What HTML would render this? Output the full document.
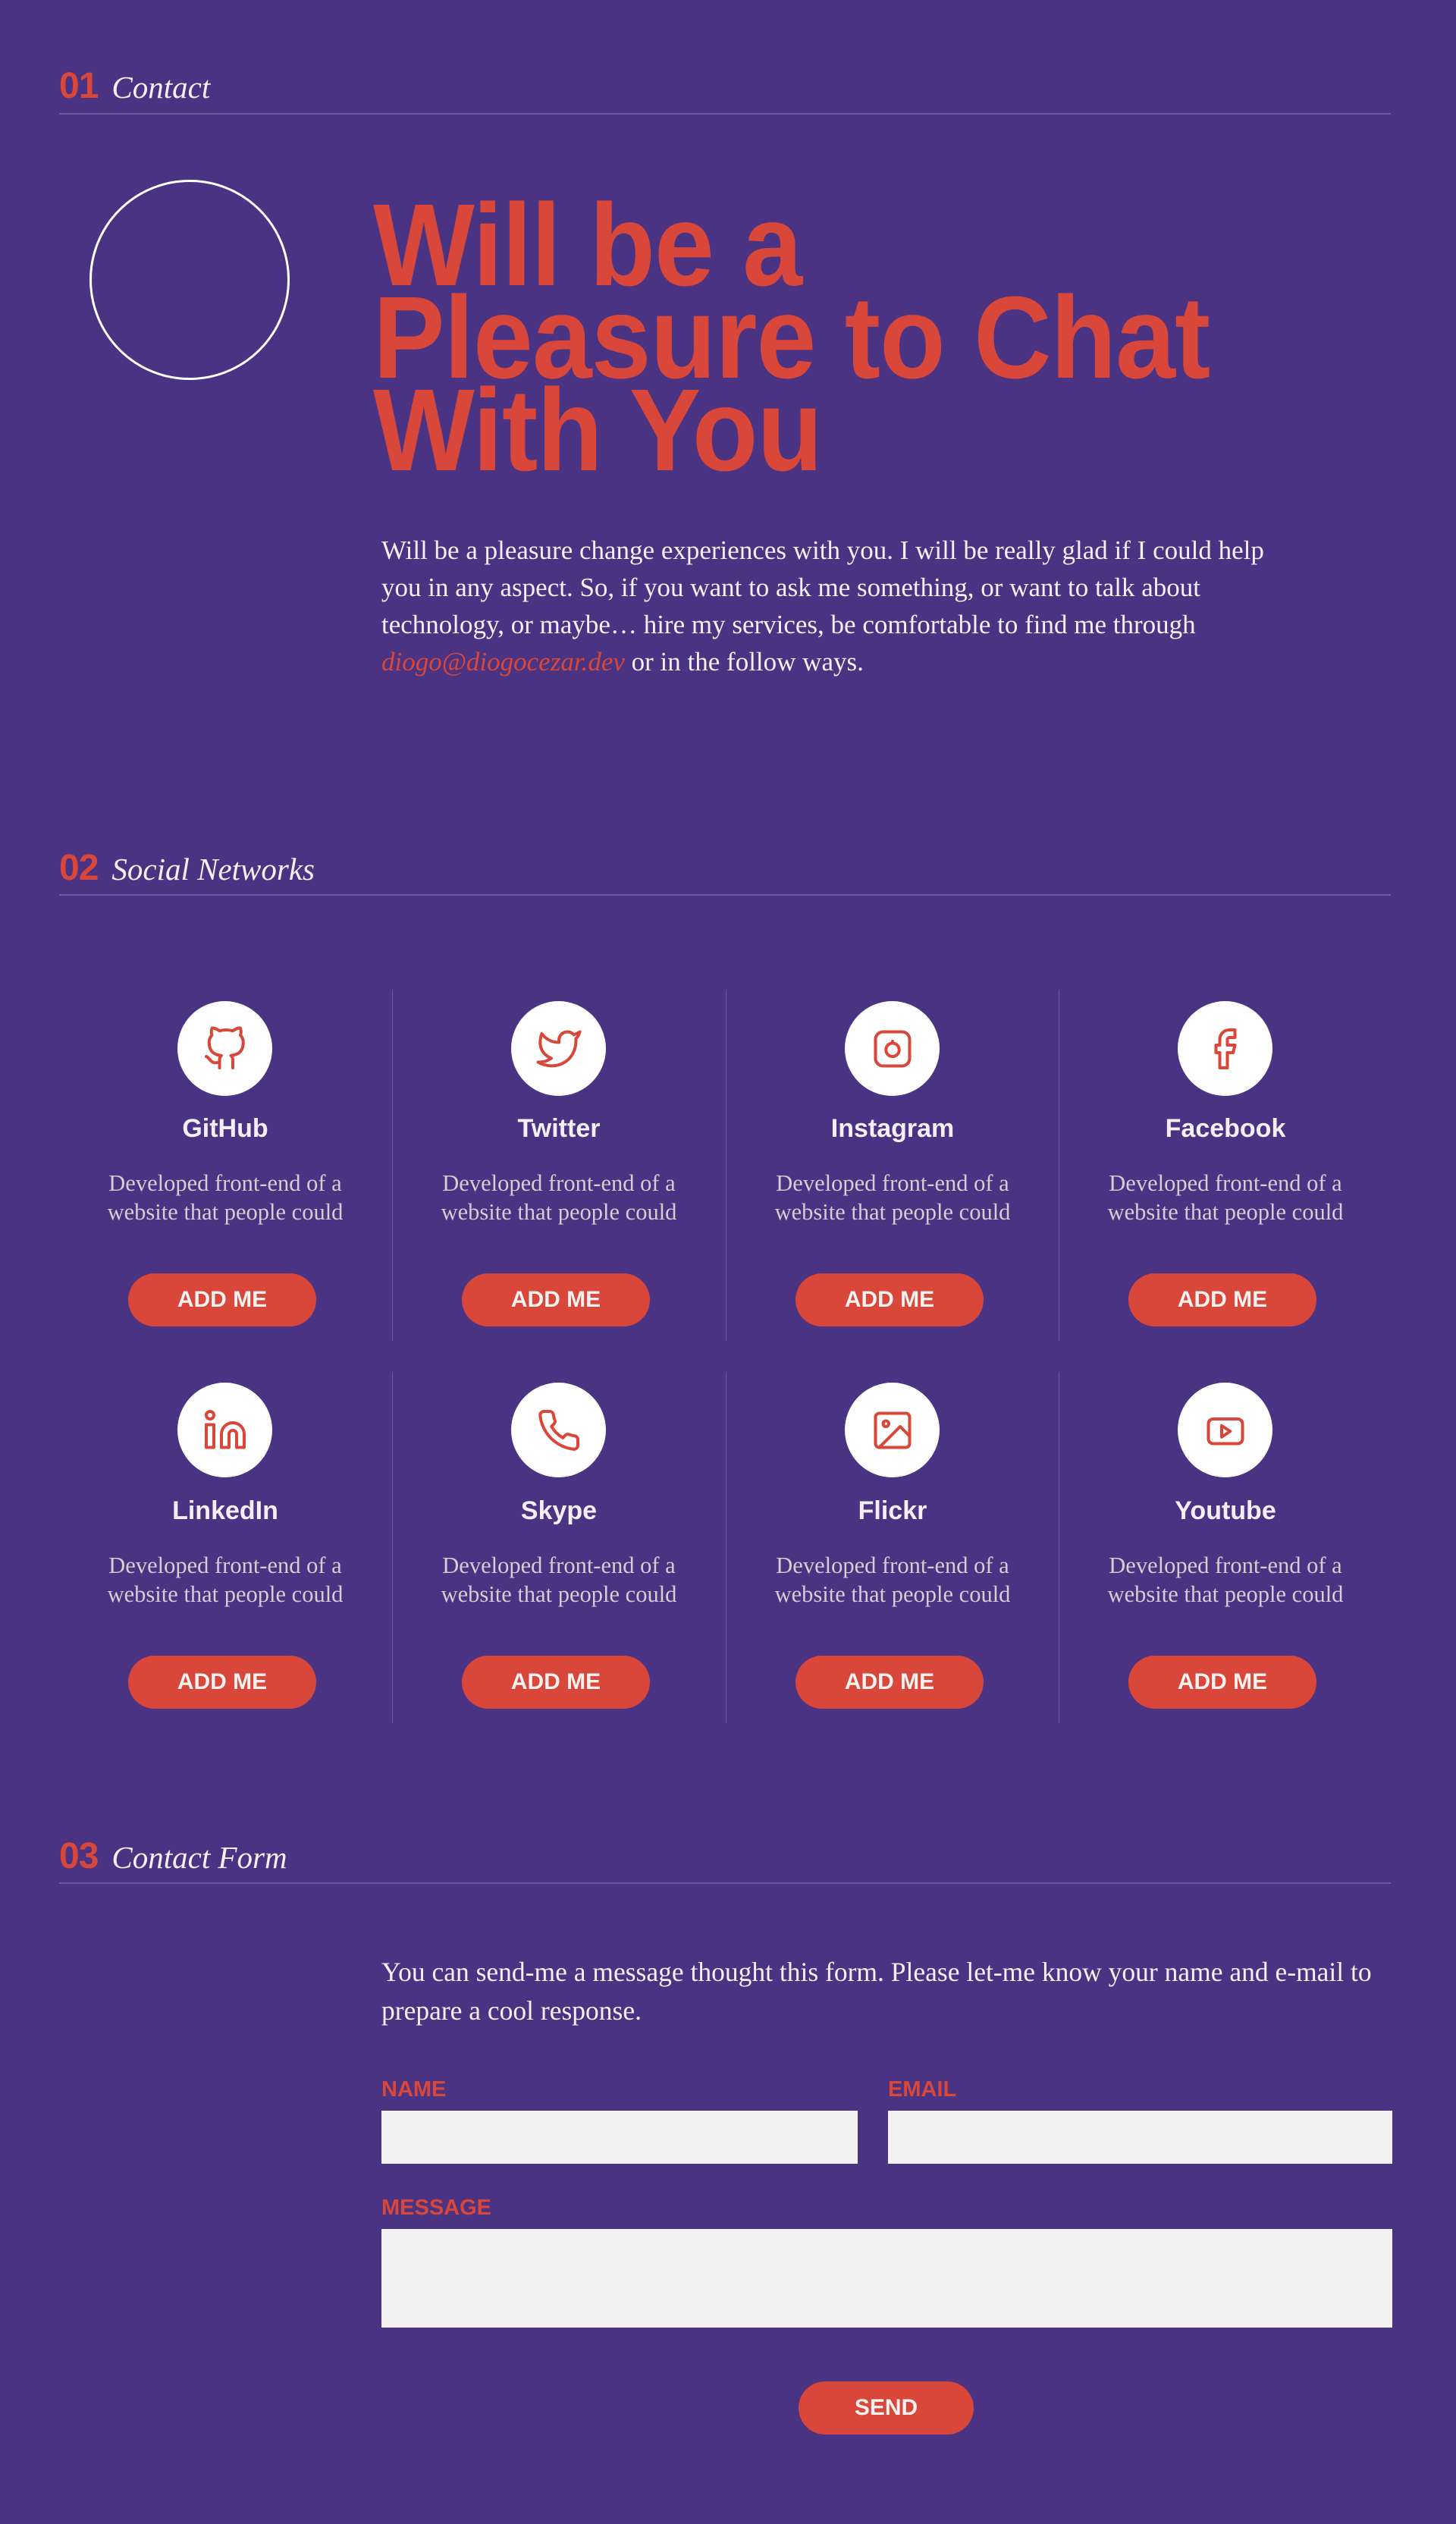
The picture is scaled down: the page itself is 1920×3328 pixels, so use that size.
<!DOCTYPE html>
<html><head><meta charset="utf-8"><style>
*{margin:0;padding:0;box-sizing:border-box}
body{width:1920px;height:3328px;background:#4a3382;position:relative;overflow:hidden;font-family:"Liberation Sans",sans-serif}
.a{position:absolute}
.sec{left:78px;line-height:48px;white-space:nowrap}
.sec b{font-family:"Liberation Sans",sans-serif;font-weight:700;font-size:48px;color:#d9473a;letter-spacing:-1px}
.sec i{font-family:"Liberation Serif",serif;font-size:41px;color:#f3f0f5;margin-left:18px}
.rule{left:78px;width:1756px;height:2px;background:#6a5a9c}
h1{position:absolute;left:492px;top:262px;font-family:"Liberation Sans",sans-serif;font-weight:700;font-size:154px;line-height:122px;letter-spacing:-1px;color:#d9473a;transform:scaleX(0.92);transform-origin:left top;white-space:nowrap}
.p{font-family:"Liberation Serif",serif;font-size:35px;color:#f3f0f5;white-space:nowrap}
.p em{color:#d9473a}
.col{width:440px;text-align:center}
.ic{position:absolute;width:125px;height:125px;border-radius:50%;background:#fff;left:157px;display:flex;align-items:center;justify-content:center}
.ic svg{width:60px;height:60px;fill:none;stroke:#d9473a;stroke-width:1.6;stroke-linecap:round;stroke-linejoin:round}
.t{position:absolute;left:0;width:440px;font-weight:700;font-size:34px;line-height:34px;color:#f3f0f5}
.d{position:absolute;left:-20px;width:480px;font-family:"Liberation Serif",serif;font-size:30.5px;line-height:38px;color:#d5cdd2;white-space:nowrap}
.btn{position:absolute;background:#d9473a;color:#f5f2f0;font-weight:700;font-size:30px;border-radius:35px;display:flex;align-items:center;justify-content:center}
.col .btn{left:92px;width:248px;height:70px}
.div{width:1px;background:#6a5a9c}
.lab{font-weight:700;font-size:29px;line-height:29px;color:#d9473a}
.in{background:#f2f2f2}
</style></head><body>

<div class="a sec" style="top:90px"><b>01</b><i>Contact</i></div>
<div class="a rule" style="top:149px"></div>

<div class="a" style="left:118px;top:237px;width:264px;height:264px;border:3px solid #fff;border-radius:50%"></div>
<h1>Will be a<br>Pleasure to Chat<br>With You</h1>

<div class="a p" style="left:503px;top:701px;line-height:49px">Will be a pleasure change experiences with you. I will be really glad if I could help<br>you in any aspect. So, if you want to ask me something, or want to talk about<br>technology, or maybe… hire my services, be comfortable to find me through<br><em>diogo@diogocezar.dev</em> or in the follow ways.</div>

<div class="a sec" style="top:1121px"><b>02</b><i>Social Networks</i></div>
<div class="a rule" style="top:1179px"></div>

<div class="a div" style="left:517px;top:1305px;height:463px"></div>
<div class="a div" style="left:957px;top:1305px;height:463px"></div>
<div class="a div" style="left:1396px;top:1305px;height:463px"></div>
<div class="a div" style="left:517px;top:1809px;height:463px"></div>
<div class="a div" style="left:957px;top:1809px;height:463px"></div>
<div class="a div" style="left:1396px;top:1809px;height:463px"></div>

<div class="a col" style="left:77px;top:0">
<div class="ic" style="top:1320px"><svg viewBox="0 0 24 24"><path d="M9 19c-5 1.5-5-2.5-7-3m14 6v-3.87a3.37 3.37 0 0 0-.94-2.61c3.14-.35 6.44-1.54 6.44-7A5.44 5.44 0 0 0 20 4.77 5.07 5.07 0 0 0 19.91 1S18.73.65 16 2.48a13.38 13.38 0 0 0-7 0C6.27.65 5.09 1 5.09 1A5.07 5.07 0 0 0 5 4.77a5.44 5.44 0 0 0-1.5 3.78c0 5.42 3.3 6.61 6.44 7A3.37 3.37 0 0 0 9 18.13V22"/></svg></div>
<div class="t" style="top:1471px">GitHub</div>
<div class="d" style="top:1541px">Developed front-end of a<br>website that people could</div>
<div class="btn" style="top:1679px">ADD ME</div></div>

<div class="a col" style="left:517px;top:0">
<div class="ic" style="top:1320px"><svg viewBox="0 0 24 24"><path d="M23 3a10.9 10.9 0 0 1-3.14 1.53 4.48 4.48 0 0 0-7.860 3v1A10.66 10.66 0 0 1 3 4s-4 9 5 13a11.64 11.64 0 0 1-7 2c9 5 20 0 20-11.5a4.5 4.5 0 0 0-.08-.83A7.72 7.72 0 0 0 23 3z"/></svg></div>
<div class="t" style="top:1471px">Twitter</div>
<div class="d" style="top:1541px">Developed front-end of a<br>website that people could</div>
<div class="btn" style="top:1679px">ADD ME</div></div>

<div class="a col" style="left:957px;top:0">
<div class="ic" style="top:1320px"><svg viewBox="0 0 24 24"><rect x="3" y="3" width="18" height="18" rx="4"/><circle cx="12" cy="12.5" r="3.5"/><path d="M12 8.5v-.5"/></svg></div>
<div class="t" style="top:1471px">Instagram</div>
<div class="d" style="top:1541px">Developed front-end of a<br>website that people could</div>
<div class="btn" style="top:1679px">ADD ME</div></div>

<div class="a col" style="left:1396px;top:0">
<div class="ic" style="top:1320px"><svg viewBox="0 0 24 24"><path d="M17 2h-3a5 5 0 0 0-5 5v3H7v4h2v8h4v-8h3l1-4h-4V7a1 1 0 0 1 1-1h3z"/></svg></div>
<div class="t" style="top:1471px">Facebook</div>
<div class="d" style="top:1541px">Developed front-end of a<br>website that people could</div>
<div class="btn" style="top:1679px">ADD ME</div></div>

<div class="a col" style="left:77px;top:0">
<div class="ic" style="top:1823px"><svg viewBox="0 0 24 24"><path d="M16 8a6 6 0 0 1 6 6v7h-4v-7a2 2 0 0 0-4 0v7h-4v-7a6 6 0 0 1 6-6z"/><rect x="2" y="9" width="4" height="12"/><circle cx="4" cy="4" r="2"/></svg></div>
<div class="t" style="top:1975px">LinkedIn</div>
<div class="d" style="top:2045px">Developed front-end of a<br>website that people could</div>
<div class="btn" style="top:2183px">ADD ME</div></div>

<div class="a col" style="left:517px;top:0">
<div class="ic" style="top:1823px"><svg viewBox="0 0 24 24"><path d="M22 16.92v3a2 2 0 0 1-2.18 2 19.79 19.79 0 0 1-8.63-3.07 19.5 19.5 0 0 1-6-6 19.79 19.79 0 0 1-3.07-8.67A2 2 0 0 1 4.11 2h3a2 2 0 0 1 2 1.72 12.84 12.84 0 0 0 .7 2.81 2 2 0 0 1-.45 2.11L8.09 9.91a16 16 0 0 0 6 6l1.27-1.27a2 2 0 0 1 2.11-.45 12.84 12.84 0 0 0 2.81.7A2 2 0 0 1 22 16.92z"/></svg></div>
<div class="t" style="top:1975px">Skype</div>
<div class="d" style="top:2045px">Developed front-end of a<br>website that people could</div>
<div class="btn" style="top:2183px">ADD ME</div></div>

<div class="a col" style="left:957px;top:0">
<div class="ic" style="top:1823px"><svg viewBox="0 0 24 24"><rect x="3" y="3" width="18" height="18" rx="2"/><circle cx="8.5" cy="8.5" r="1.5"/><path d="M21 15l-5-5L5 21"/></svg></div>
<div class="t" style="top:1975px">Flickr</div>
<div class="d" style="top:2045px">Developed front-end of a<br>website that people could</div>
<div class="btn" style="top:2183px">ADD ME</div></div>

<div class="a col" style="left:1396px;top:0">
<div class="ic" style="top:1823px"><svg viewBox="0 0 24 24"><rect x="3" y="6" width="18" height="13" rx="2.5"/><path d="M10 9.5l4.5 3-4.5 3z"/></svg></div>
<div class="t" style="top:1975px">Youtube</div>
<div class="d" style="top:2045px">Developed front-end of a<br>website that people could</div>
<div class="btn" style="top:2183px">ADD ME</div></div>

<div class="a sec" style="top:2424px"><b>03</b><i>Contact Form</i></div>
<div class="a rule" style="top:2482px"></div>

<div class="a p" style="left:503px;top:2575px;line-height:51px;font-size:35.5px">You can send-me a message thought this form. Please let-me know your name and e-mail to<br>prepare a cool response.</div>

<div class="a lab" style="left:503px;top:2741px">NAME</div>
<div class="a lab" style="left:1171px;top:2741px">EMAIL</div>
<div class="a in" style="left:503px;top:2783px;width:628px;height:70px"></div>
<div class="a in" style="left:1171px;top:2783px;width:665px;height:70px"></div>
<div class="a lab" style="left:503px;top:2897px">MESSAGE</div>
<div class="a in" style="left:503px;top:2939px;width:1333px;height:130px"></div>

<div class="btn" style="left:1053px;top:3140px;width:231px;height:70px">SEND</div>
</body></html>
